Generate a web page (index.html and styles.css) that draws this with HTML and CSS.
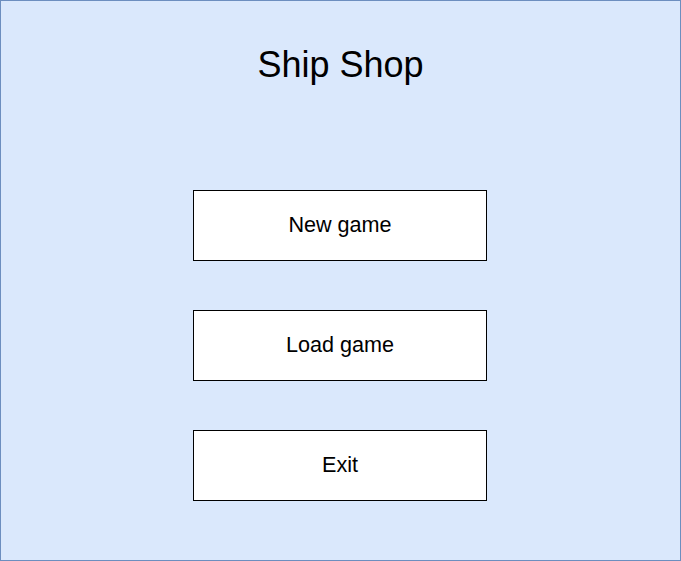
FILE: index.html
```html
<!DOCTYPE html>
<html>
<head>
<meta charset="utf-8">
<link rel="stylesheet" href="styles.css">
</head>
<body>
<div class="screen">
  <h1 class="title">Ship Shop</h1>
  <div class="menu">
    <div class="btn">New game</div>
    <div class="btn">Load game</div>
    <div class="btn">Exit</div>
  </div>
</div>
</body>
</html>
```

FILE: styles.css
```css
html, body {
  margin: 0;
  padding: 0;
  background: #ffffff;
}
.screen {
  box-sizing: border-box;
  width: 681px;
  height: 561px;
  background: #dae8fc;
  border: 1px solid #6c8ebf;
  font-family: "Liberation Sans", Arial, sans-serif;
  color: #000;
  display: flex;
  flex-direction: column;
  align-items: center;
}
.title {
  margin: 44px 0 0 0;
  font-size: 36px;
  font-weight: normal;
  line-height: 40px;
  height: 40px;
}
.menu {
  margin-top: 105px;
  display: flex;
  flex-direction: column;
  gap: 49px;
  margin-right: 1px;
}
.btn {
  box-sizing: border-box;
  width: 294px;
  height: 71px;
  background: #ffffff;
  border: 1px solid #000;
  display: flex;
  align-items: center;
  justify-content: center;
  font-size: 21.6px;
  padding-bottom: 1px;
}
```
